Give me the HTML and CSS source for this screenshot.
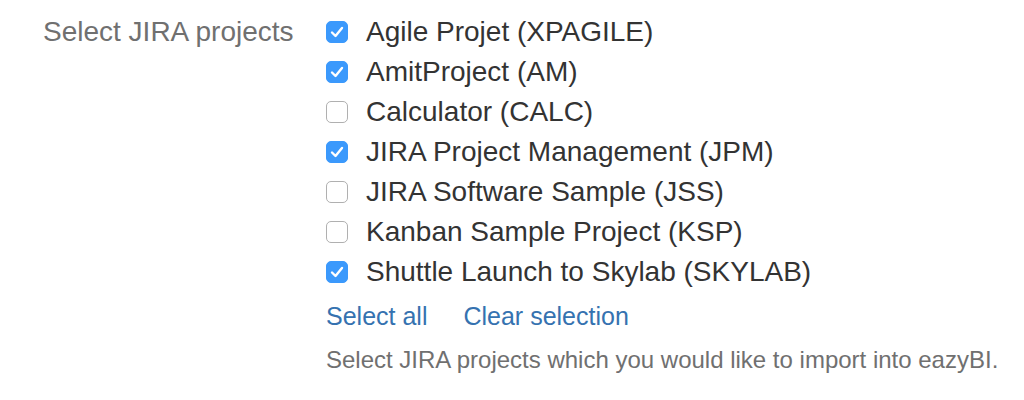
FILE: index.html
```html
<!DOCTYPE html>
<html>
<head>
<meta charset="utf-8">
<link rel="stylesheet" href="styles.css">
</head>
<body>
<div class="form">
  <div class="label">Select JIRA projects</div>
  <div class="field">
    <div class="opt"><span class="cb on"><svg viewBox="0 0 22 22" width="22" height="22"><path d="M6 11.5 L9.5 15 L16 7" fill="none" stroke="#fff" stroke-width="2.4" stroke-linecap="round" stroke-linejoin="round"/></svg></span><span>Agile Projet (XPAGILE)</span></div>
    <div class="opt"><span class="cb on"><svg viewBox="0 0 22 22" width="22" height="22"><path d="M6 11.5 L9.5 15 L16 7" fill="none" stroke="#fff" stroke-width="2.4" stroke-linecap="round" stroke-linejoin="round"/></svg></span><span>AmitProject (AM)</span></div>
    <div class="opt"><span class="cb"></span><span>Calculator (CALC)</span></div>
    <div class="opt"><span class="cb on"><svg viewBox="0 0 22 22" width="22" height="22"><path d="M6 11.5 L9.5 15 L16 7" fill="none" stroke="#fff" stroke-width="2.4" stroke-linecap="round" stroke-linejoin="round"/></svg></span><span>JIRA Project Management (JPM)</span></div>
    <div class="opt"><span class="cb"></span><span>JIRA Software Sample (JSS)</span></div>
    <div class="opt"><span class="cb"></span><span>Kanban Sample Project (KSP)</span></div>
    <div class="opt"><span class="cb on"><svg viewBox="0 0 22 22" width="22" height="22"><path d="M6 11.5 L9.5 15 L16 7" fill="none" stroke="#fff" stroke-width="2.4" stroke-linecap="round" stroke-linejoin="round"/></svg></span><span>Shuttle Launch to Skylab (SKYLAB)</span></div>
    <div class="links"><a class="link">Select all</a><a class="link">Clear selection</a></div>
    <div class="help">Select JIRA projects which you would like to import into eazyBI.</div>
  </div>
</div>
</body>
</html>
```
FILE: styles.css
```css
html, body { margin: 0; padding: 0; background: #fff; }
body { font-family: "Liberation Sans", Arial, sans-serif; }
.form {
  display: grid;
  grid-template-columns: 283px auto;
  padding: 12px 0 0 43px;
}
.label {
  font-size: 28px;
  line-height: 40px;
  color: #707070;
}
.field { display: flex; flex-direction: column; }
.opt {
  display: flex;
  align-items: center;
  gap: 18px;
  height: 40px;
  font-size: 28px;
  color: #333;
}
.cb {
  width: 22px;
  height: 22px;
  box-sizing: border-box;
  border: 1px solid #b0b0b0;
  border-radius: 5px;
  background: #fff;
  display: flex;
  align-items: center;
  justify-content: center;
  flex: none;
}
.cb.on {
  background: #3b99fc;
  border-color: #3b99fc;
}
.cb svg { display: block; flex: none; }
.links {
  display: flex;
  gap: 36px;
  margin-top: 4px;
  line-height: 40px;
  font-size: 25px;
}
.link { color: #3572b0; text-decoration: none; }
.help {
  margin-top: 8px;
  font-size: 24px;
  line-height: 32px;
  color: #707070;
}
```
